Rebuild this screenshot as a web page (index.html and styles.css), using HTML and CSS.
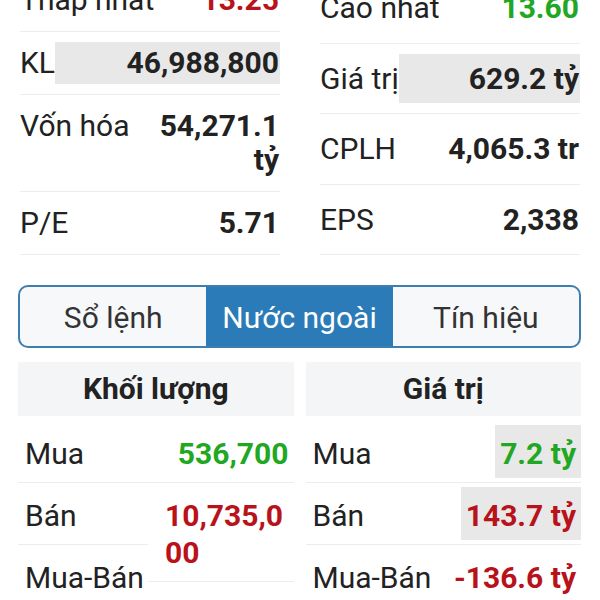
FILE: index.html
```html
<!DOCTYPE html>
<html lang="vi">
<head>
  <meta charset="UTF-8">
  <meta name="viewport" content="width=device-width, initial-scale=1.0">
  <title>Chi tiết mã</title>
  <link rel="stylesheet" href="styles.css">
</head>
<body>
  <!-- Thông tin cơ bản -->
  <div class="stats">
    <div class="stat-col">
      <div class="stat-row">
        <span class="stat-label">Thấp nhất</span>
        <span class="stat-val down">13.25</span>
      </div>
      <div class="stat-row">
        <span class="stat-label">KL</span>
        <span class="stat-val hl">46,988,800</span>
      </div>
      <div class="stat-row">
        <span class="stat-label">Vốn hóa</span>
        <span class="stat-val">54,271.1 tỷ</span>
      </div>
      <div class="stat-row">
        <span class="stat-label">P/E</span>
        <span class="stat-val">5.71</span>
      </div>
    </div>
    <div class="stat-col tall">
      <div class="stat-row">
        <span class="stat-label">Cao nhất</span>
        <span class="stat-val up">13.60</span>
      </div>
      <div class="stat-row">
        <span class="stat-label">Giá trị</span>
        <span class="stat-val hl">629.2 tỷ</span>
      </div>
      <div class="stat-row">
        <span class="stat-label">CPLH</span>
        <span class="stat-val">4,065.3 tr</span>
      </div>
      <div class="stat-row">
        <span class="stat-label">EPS</span>
        <span class="stat-val">2,338</span>
      </div>
    </div>
  </div>

  <!-- Tab -->
  <div class="tabs">
    <div class="tab">Sổ lệnh</div>
    <div class="tab active">Nước ngoài</div>
    <div class="tab">Tín hiệu</div>
  </div>

  <!-- Giao dịch nước ngoài -->
  <div class="foreign">
    <div class="fx-col">
      <div class="fx-head">Khối lượng</div>
      <div class="fx-list">
        <div class="fx-label">Mua</div>
        <div class="fx-val"><span class="fx-num up">536,700</span></div>
        <div class="fx-label">Bán</div>
        <div class="fx-val"><span class="fx-num down">10,735,000</span></div>
        <div class="fx-label">Mua-Bán</div>
        <div class="fx-val"><span class="fx-num down">-10,198,300</span></div>
      </div>
    </div>
    <div class="fx-col">
      <div class="fx-head">Giá trị</div>
      <div class="fx-list">
        <div class="fx-label">Mua</div>
        <div class="fx-val"><span class="fx-num up hl">7.2 tỷ</span></div>
        <div class="fx-label">Bán</div>
        <div class="fx-val"><span class="fx-num down hl">143.7 tỷ</span></div>
        <div class="fx-label">Mua-Bán</div>
        <div class="fx-val"><span class="fx-num down">-136.6 tỷ</span></div>
      </div>
    </div>
  </div>
</body>
</html>
```

FILE: styles.css
```css
body {
  font-family: Roboto, 'Noto Sans', Arial, sans-serif;
  font-size: 30px;
  background: #fff;
  margin: 0;
  color: #222;
  overflow: hidden;
}
.up {
  color: #22a722;
}
.down {
  color: #b8121b;
}
/* thông tin cơ bản */
.stats {
  display: flex;
  align-items: flex-end;
  gap: 40px;
  padding: 0 20px;
  margin-top: -31px;
}
.stat-col {
  flex: 1;
}
.stat-row {
  display: flex;
  align-items: flex-start;
  padding: 10px 0;
  border-bottom: 1px solid #ededed;
}
.stat-label {
  flex: none;
  line-height: 34px;
  padding: 4px 0;
  white-space: nowrap;
}
.stat-val {
  flex: 1;
  min-width: 0;
  text-align: right;
  font-weight: bold;
  line-height: 34px;
  padding: 4px 1px;
}
.stat-val.hl {
  background: #e8e8e8;
}
.tall .stat-row {
  padding: 10.5px 0 10px;
}
.tall .stat-label,
.tall .stat-val {
  padding-top: 7.5px;
  padding-bottom: 7.5px;
}
/* tab */
.tabs {
  display: grid;
  grid-template-columns: 1fr 1fr 1fr;
  margin: 30px 19px 0 18px;
  border: 2px solid #3d7eae;
  border-radius: 10px;
  overflow: hidden;
  background: #f6f8fa;
}
.tab {
  text-align: center;
  line-height: 55px;
  padding: 3px 0 1px;
  color: #333;
}
.tab.active {
  background: #2b7bb8;
  color: #fff;
}
/* nước ngoài */
.foreign {
  display: grid;
  grid-template-columns: 1fr 1fr;
  gap: 12px;
  margin: 14px 19px 0 18px;
}
.fx-head {
  background: #f4f5f7;
  line-height: 54px;
  text-align: center;
  font-weight: bold;
  margin-bottom: 5px;
}
.fx-list {
  display: flow-root;
}
.fx-label {
  float: left;
  width: 130px;
  box-sizing: border-box;
  padding: 14px 0 10px 7px;
  line-height: 37px;
  border-bottom: 1px solid #ededed;
  white-space: nowrap;
}
.fx-val {
  float: right;
  width: calc(100% - 130px);
  box-sizing: border-box;
  padding: 4px 0 4px 12px;
  text-align: right;
  border-bottom: 1px solid #ededed;
}
.fx-num {
  display: inline-block;
  padding: 10px 5px 6px;
  line-height: 37px;
  font-weight: bold;
  text-align: left;
  word-break: break-all;
}
.fx-num.hl {
  background: #e8e8e8;
}
```
